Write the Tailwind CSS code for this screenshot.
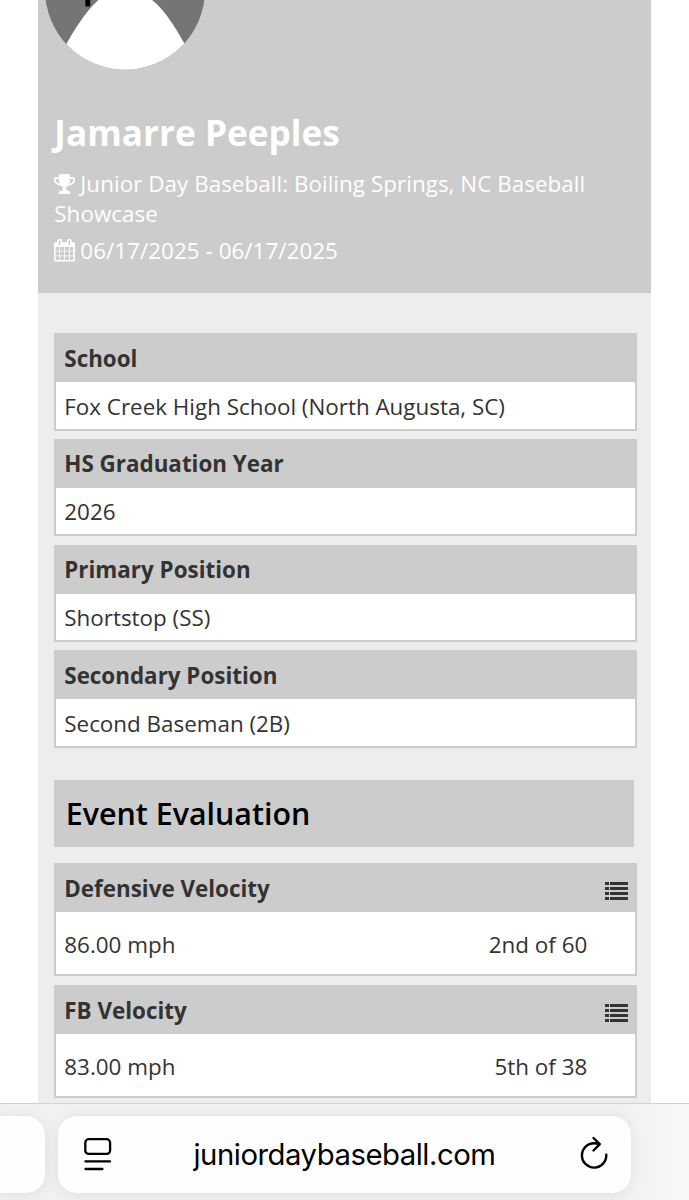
<!DOCTYPE html>
<html lang="en">
<head>
<meta charset="utf-8">
<title>Jamarre Peeples</title>
<script src="https://cdn.jsdelivr.net/npm/@tailwindcss/browser@4"></script>
</head>
<body class="h-[1200px] w-[689px] overflow-hidden bg-white font-['Open_Sans',sans-serif] text-[#333]">
<div class="flex h-[1200px] flex-col overflow-hidden">
  <main class="ml-[38.3px] h-[1103px] w-[612.3px] shrink-0 overflow-hidden bg-[#ededed]">
    <header class="h-[292.5px] bg-[#ccc] text-white">
      <svg class="ml-[6px] block h-[70px] w-[162px]" viewBox="0 0 162 70">
        <defs><clipPath id="c"><circle cx="81" cy="-10.3" r="80"/></clipPath></defs>
        <g clip-path="url(#c)">
          <rect width="162" height="70" fill="#757575"/>
          <path d="M8.500 70 Q35.500 16 54.500 0 L108 0 Q127 14 154 70Z" fill="#fff"/>
          <rect x="41.3" y="-5" width="5" height="11.5" rx="1.5" fill="#000"/>
        </g>
      </svg>
      <div class="pl-4">
        <h1 class="mt-[38px] h-12 whitespace-nowrap text-[35.2px] leading-12 font-bold"><span>Jamarre Peeples</span></h1>
        <div class="mt-[13px] text-[22.4px] leading-[30px] tracking-[0.05px]">
          <div class="flex h-[30px] items-center whitespace-nowrap"><svg class="mr-[5px] mb-[1px] h-[20px] w-[21px] shrink-0" viewBox="64 128 1664 1536" preserveAspectRatio="none" fill="currentColor"><path d="M522 883q-74-162-74-371H192v96q0 78 94.5 162T522 883zm1078-275v-96h-256q0 209-74 371 141-29 235.5-113t94.5-162zm128-128v128q0 71-41.5 143t-112 130-173 97.5T1186 1020q-42 54-95 95-38 34-52.5 72.5T1024 1280q0 54 30.5 91t97.5 37q75 0 133.5 45.5T1344 1568v64q0 14-9 23t-23 9H480q-14 0-23-9t-9-23v-64q0-69 58.5-114.5T640 1408q67 0 97.5-37t30.5-91q0-54-14.5-92.5T701 1115q-53-41-95-95-113-5-215.5-44.5t-173-97.5-112-130T64 608V480q0-40 28-68t68-28h288v-96q0-66 47-113t113-47h576q66 0 113 47t47 113v96h288q40 0 68 28t28 68z"/></svg><span>Junior Day Baseball: Boiling Springs, NC Baseball</span></div>
          <div><span>Showcase</span></div>
          <div class="mt-[7px] flex h-[30px] items-center whitespace-nowrap"><svg class="mr-[5px] mb-[1px] h-[22.500px] w-[21px] shrink-0" viewBox="64 0 1664 1792" preserveAspectRatio="none" fill="currentColor"><path d="M192 1664h288v-288H192v288zm352 0h320v-288H544v288zM192 1312h288V992H192v320zm352 0h320V992H544v320zM192 928h288V640H192v288zm736 736h320v-288H928v288zM544 928h320V640H544v288zm768 736h288v-288h-288v288zm-384-352h320V992H928v320zM576 448V160q0-13-9.5-22.5T544 128h-64q-13 0-22.5 9.5T448 160v288q0 13 9.5 22.5T480 480h64q13 0 22.5-9.5T576 448zm736 864h288V992h-288v320zM928 928h320V640H928v288zm384 0h288V640h-288v288zm32-480V160q0-13-9.5-22.5T1312 128h-64q-13 0-22.5 9.5T1216 160v288q0 13 9.5 22.5t22.5 9.5h64q13 0 22.5-9.5t9.5-22.5zm384-64v1280q0 52-38 90t-90 38H192q-52 0-90-38t-38-90V384q0-52 38-90t90-38h128v-96q0-66 47-113T480 0h64q66 0 113 47t47 113v96h384v-96q0-66 47-113t113-47h64q66 0 113 47t47 113v96h128q52 0 90 38t38 90z"/></svg><span>06/17/2025 - 06/17/2025</span></div>
        </div>
      </div>
    </header>

    <div class="ml-4 w-[583px] pt-[40.5px] text-[22.4px] whitespace-nowrap">
      <div class="flex flex-col gap-[8.3px]">
        <section class="h-[97.5px] border-2 border-t-0 border-[#ccc] bg-white"><h2 class="flex h-[49px] items-center bg-[#ccc] px-2 pt-[2px] font-bold">School</h2><p class="flex h-[47px] items-center px-2 pt-[2px]">Fox Creek High School (North Augusta, SC)</p></section>
        <section class="h-[97.5px] border-2 border-t-0 border-[#ccc] bg-white"><h2 class="flex h-[49px] items-center bg-[#ccc] px-2 pt-[2px] font-bold">HS Graduation Year</h2><p class="flex h-[47px] items-center px-2 pt-[2px]">2026</p></section>
        <section class="h-[97.5px] border-2 border-t-0 border-[#ccc] bg-white"><h2 class="flex h-[49px] items-center bg-[#ccc] px-2 pt-[2px] font-bold">Primary Position</h2><p class="flex h-[47px] items-center px-2 pt-[2px]">Shortstop (SS)</p></section>
        <section class="h-[97.5px] border-2 border-t-0 border-[#ccc] bg-white"><h2 class="flex h-[49px] items-center bg-[#ccc] px-2 pt-[2px] font-bold">Secondary Position</h2><p class="flex h-[47px] items-center px-2 pt-[2px]">Second Baseman (2B)</p></section>
      </div>
      <h2 class="mt-[32px] flex h-[67px] w-[580px] items-center bg-[#ccc] pl-[11.5px] text-[30.4px] font-semibold text-black">Event Evaluation</h2>
      <div class="mt-4 flex flex-col gap-[8.5px]">
        <section class="h-[113.5px] border-2 border-t-0 border-[#ccc] bg-white">
          <h2 class="flex h-[49.5px] items-center justify-between bg-[#ccc] pt-[2px] pr-[7px] pl-2 font-bold">Defensive Velocity<svg class="mt-[4px] h-[18px] w-[23px]" viewBox="0 0 23 18" fill="#333"><path d="M0 0h4v3H0zM5 0h18v3H5zM0 5h4v3H0zM5 5h18v3H5zM0 10h4v3H0zM5 10h18v3H5zM0 15h4v3H0zM5 15h18v3H5z"/></svg></h2>
          <p class="flex h-[63px] items-center justify-between pt-[2px] pr-[48px] pl-2"><span>86.00 mph</span><span>2nd of 60</span></p>
        </section>
        <section class="h-[113.5px] border-2 border-t-0 border-[#ccc] bg-white">
          <h2 class="flex h-[49.5px] items-center justify-between bg-[#ccc] pt-[2px] pr-[7px] pl-2 font-bold">FB Velocity<svg class="mt-[4px] h-[18px] w-[23px]" viewBox="0 0 23 18" fill="#333"><path d="M0 0h4v3H0zM5 0h18v3H5zM0 5h4v3H0zM5 5h18v3H5zM0 10h4v3H0zM5 10h18v3H5zM0 15h4v3H0zM5 15h18v3H5z"/></svg></h2>
          <p class="flex h-[63px] items-center justify-between pt-[2px] pr-[48px] pl-2"><span>83.00 mph</span><span>5th of 38</span></p>
        </section>
      </div>
    </div>
  </main>

  <footer class="flex h-[97px] shrink-0 gap-[13px] overflow-hidden border-t border-[#d2d2d2] bg-linear-to-r from-[#f1f1f1] from-90% to-[#f8f8f8] pt-3">
    <div class="h-[77px] w-[45px] shrink-0 rounded-r-[19px] bg-[#fefefe] shadow-[0_2px_16px_rgba(0,0,0,0.08)]"></div>
    <div class="flex h-[77px] w-[573px] shrink-0 items-center rounded-[19px] bg-[#fefefe] pl-[26px] shadow-[0_2px_16px_rgba(0,0,0,0.08)]">
      <svg class="mb-[2px] h-[34px] w-7 shrink-0" viewBox="0 0 28 34" fill="none" stroke="#000" stroke-width="2.3" stroke-linecap="round"><rect x="1.3" y="2.2" width="24.8" height="14.7" rx="3.5"/><path d="M1.5 24.4H26M1.5 32H18.4"/></svg>
      <div class="ml-[81.500px] w-[302px] whitespace-nowrap font-['Inter',sans-serif] text-[29.3px] tracking-[-0.48px] text-black">juniordaybaseball.com</div>
      <svg class="mb-[3px] ml-[84px] h-[34px] w-7 shrink-0" viewBox="0 0 28 34" fill="none" stroke="#000" stroke-width="2.4" stroke-linecap="round" stroke-linejoin="round"><path d="M26.3 18.8A12.2 12.2 0 1 1 14.1 7.2Q17 7.2 19.3 8.1M13.5 2L19.8 8.2L13.5 14.5"/></svg>
    </div>
  </footer>
</div>
</body>
</html>
